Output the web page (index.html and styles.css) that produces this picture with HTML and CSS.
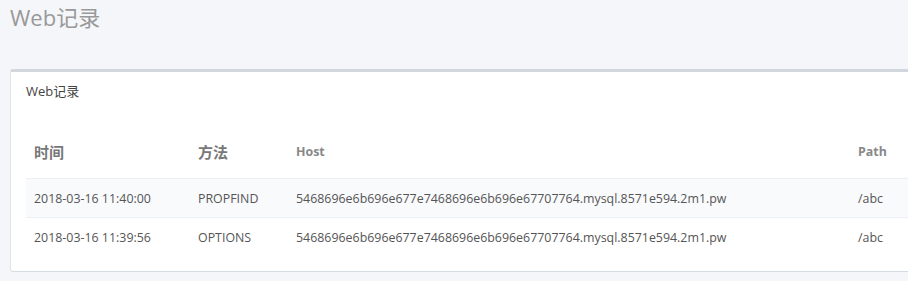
FILE: index.html
```html
<!DOCTYPE html>
<html>
<head>
  <meta charset="utf-8">
  <title>Web记录</title>
  <link rel="stylesheet" href="styles.css">
</head>
<body>
  <h1 class="page-title">Web记录</h1>

  <div class="box">
    <div class="box-header">Web记录</div>
    <div class="box-body">
      <table class="log-table">
        <thead>
          <tr>
            <th class="col-time">时间</th>
            <th class="col-method">方法</th>
            <th class="col-host">Host</th>
            <th class="col-path">Path</th>
          </tr>
        </thead>
        <tbody>
          <tr>
            <td>2018-03-16 11:40:00</td>
            <td>PROPFIND</td>
            <td>5468696e6b696e677e7468696e6b696e67707764.mysql.8571e594.2m1.pw</td>
            <td>/abc</td>
          </tr>
          <tr>
            <td>2018-03-16 11:39:56</td>
            <td>OPTIONS</td>
            <td>5468696e6b696e677e7468696e6b696e67707764.mysql.8571e594.2m1.pw</td>
            <td>/abc</td>
          </tr>
        </tbody>
      </table>
    </div>
  </div>
</body>
</html>
```

FILE: styles.css
```css
body { margin: 0; padding: 0 0 0 10px; background: #f4f6f9; font-family: "Open Sans", "Noto Sans CJK SC", sans-serif; color: #555; overflow: hidden; }
.page-title { margin: 0; padding-top: 2px; height: 67px; font-size: 22px; font-weight: normal; color: #999; line-height: 30px; }
.box { width: 1000px; background: #fff; border-top: 3px solid #d2d6de; border-left: 1px solid #dde3e9; border-bottom: 1px solid #d4dbe2; border-radius: 3px; }
.box-header { padding: 10px 15px 0; height: 42px; font-size: 13px; color: #444; line-height: 18px; }
.box-body { padding: 0 15px 15px; }
.log-table { border-collapse: collapse; width: 960px; font-size: 12.4px; }
.log-table th { text-align: left; font-weight: bold; color: #888; padding: 18px 8px 16px; height: 20px; vertical-align: middle; line-height: 20px; }
.log-table th.col-time, .log-table th.col-method { font-size: 15px; color: #777; }
.log-table td { padding: 0 8px; height: 38px; border-top: 1px solid #eceff3; color: #555; }
.log-table tbody tr:nth-child(odd) { background: #f9fafc; }
.col-time { width: 148px; }
.col-method { width: 82px; }
.col-host { width: 546px; }
```
